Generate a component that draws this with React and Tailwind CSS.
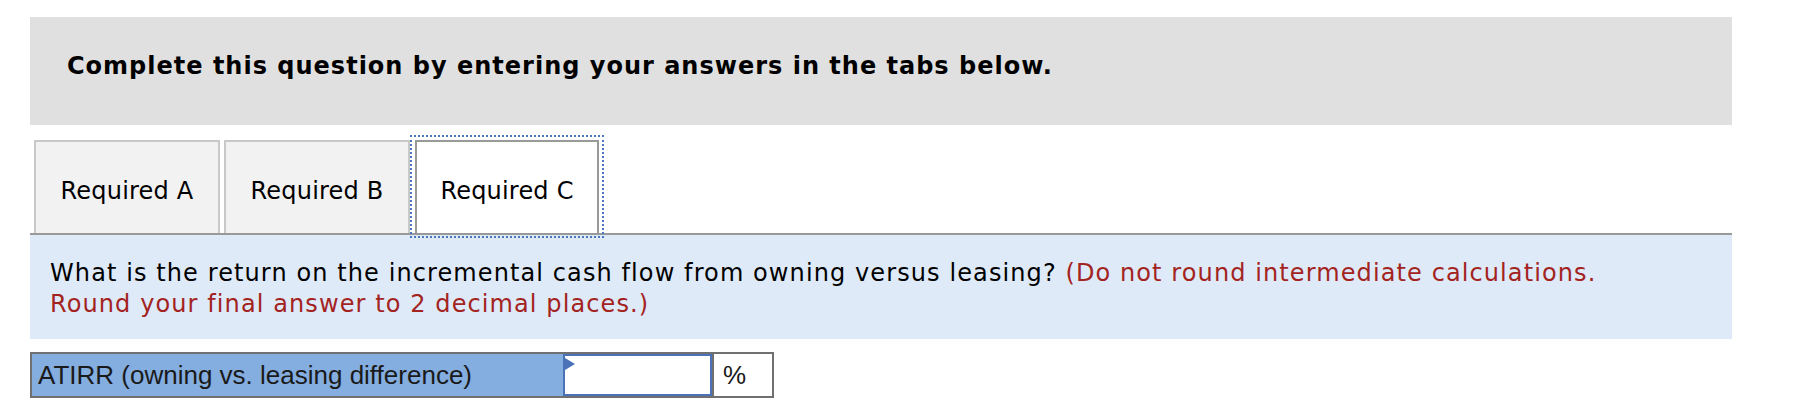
import React from 'react';

const tabs = ['Required A', 'Required B', 'Required C'];

const Tab = ({ label, active }) => {
    if (active) {
        return (
            <div className="ml-[5px] w-[184px] h-[93px] pt-[6px] flex items-center justify-center bg-white border-2 border-b-0 border-[#999999] outline-2 outline-dotted outline-[#4a77c0] outline-offset-[3px]">
                {label}
            </div>
        );
    }
    return (
        <div className="ml-[4px] w-[186px] h-[93px] pt-[6px] flex items-center justify-center bg-[#f2f2f2] border-2 border-b-0 border-[#c8c8c8]">
            {label}
        </div>
    );
};

const App = () => {
    return (
        <div className="w-[1796px] h-[410px] bg-white pt-[17px] pl-[30px] text-black font-['DejaVu_Sans',Verdana,sans-serif]">
            <div className="w-[1702px]">
                {/* Instructions bar */}
                <div className="h-[108px] bg-[#e0e0e0] pl-[37px] pt-[35px]">
                    <p className="text-[24px] leading-[28px] font-bold tracking-[1px]">
                        Complete this question by entering your answers in the tabs below.
                    </p>
                </div>

                {/* Tabs */}
                <div className="mt-[15px] flex items-end text-[24px] tracking-[0.2px]">
                    {tabs.map((t, i) => (
                        <Tab key={t} label={t} active={i === 2} />
                    ))}
                </div>
                <div className="h-[2px] bg-[#999999]" />

                {/* Question */}
                <div className="h-[104px] bg-[#deeaf7] pl-[20px] pt-[23px] text-[24px] leading-[31px] tracking-[1.1px]">
                    What is the return on the incremental cash flow from owning versus leasing?{' '}
                    <span className="text-[#a3231f]">
                        (Do not round intermediate calculations.
                        <br />
                        Round your final answer to 2 decimal places.)
                    </span>
                </div>

                {/* Answer row */}
                <div className="mt-[13px] w-[744px] h-[46px] flex border-2 border-[#707070] font-['Liberation_Sans',Arial,sans-serif] text-[26px] text-[#1a1a1a]">
                    <div className="w-[531px] bg-[#84ade0] flex items-center pl-[6px]">
                        ATIRR (owning vs. leasing difference)
                    </div>
                    <div className="relative w-[149px] bg-white border-2 border-[#4a72b8]">
                        <svg className="absolute left-0 top-[2px]" width="10" height="12" viewBox="0 0 10 12">
                            <polygon points="0,0 10,6 0,12" fill="#4a72b8" />
                        </svg>
                    </div>
                    <div className="flex-1 bg-white border-l-2 border-[#707070] flex items-center pl-[9px]">
                        %
                    </div>
                </div>
            </div>
        </div>
    );
};

export default App;
